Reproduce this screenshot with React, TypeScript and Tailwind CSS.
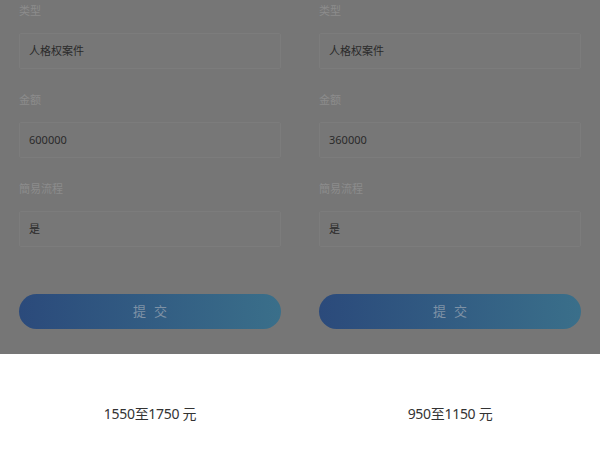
import React from "react";

const font = { fontFamily: '"Noto Sans", "Noto Sans CJK SC", sans-serif' };

function Column({ amount, price }: { amount: string; price: string }) {
  return (
    <div className="flex flex-col">
      <div className="flex flex-col px-[19px] pb-[25px] bg-[#767676]">
        <div className="h-[22px] flex items-center text-[11px] text-[#8c8c8c]">类型</div>
        <div className="mt-[11px] h-[36px] flex items-center px-[9px] border border-[#7c7c7c] bg-[#777777] rounded-[2px] text-[11px] text-[#2a2a2a]">人格权案件</div>
        <div className="mt-[20px] h-[22px] flex items-center text-[11px] text-[#8c8c8c]">金额</div>
        <div className="mt-[11px] h-[36px] flex items-center px-[9px] border border-[#7c7c7c] bg-[#777777] rounded-[2px] text-[11px] text-[#2a2a2a]">{amount}</div>
        <div className="mt-[20px] h-[22px] flex items-center text-[11px] text-[#8c8c8c]">簡易流程</div>
        <div className="mt-[11px] h-[36px] flex items-center px-[9px] border border-[#7c7c7c] bg-[#777777] rounded-[2px] text-[11px] text-[#2a2a2a]">是</div>
        <div className="mt-[47px] h-[35px] rounded-full bg-gradient-to-r from-[#2b4a7b] to-[#3a6f8a] flex items-center justify-center text-[13px] text-[#7f92a6] tracking-[8px] pl-[8px]">提交</div>
      </div>
      <div className="h-[95px] bg-white flex items-center justify-center pt-[24px] text-[14px] tracking-[-0.3px] text-[#333333]">{price}</div>
    </div>
  );
}

export default function App() {
  return (
    <div className="w-[600px] h-[449px] grid grid-cols-2 bg-white overflow-hidden" style={font}>
      <Column amount="600000" price="1550至1750 元" />
      <Column amount="360000" price="950至1150 元" />
    </div>
  );
}
